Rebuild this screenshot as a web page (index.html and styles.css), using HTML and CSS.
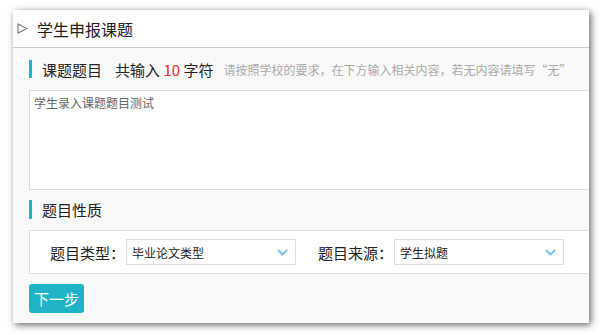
FILE: index.html
```html
<!DOCTYPE html>
<html lang="zh-CN">
<head>
  <meta charset="UTF-8">
  <meta name="viewport" content="width=device-width, initial-scale=1.0">
  <title>学生申报课题</title>
  <link rel="stylesheet" href="styles.css">
</head>
<body>
  <div class="panel">
    <div class="panel-head">
      <svg class="toggle" width="11" height="11" viewBox="0 0 11 11">
        <path d="M1 1 L10 5.5 L1 10 Z" fill="none" stroke="#777" stroke-width="1.1"/>
      </svg>
      <span class="panel-title">学生申报课题</span>
    </div>
    <div class="panel-body">
      <div class="section-title">
        <span class="name">课题题目</span>
        <span class="count">共输入 <em>10</em> 字符</span>
        <span class="hint">请按照学校的要求，在下方输入相关内容，若无内容请填写“无”</span>
      </div>
      <textarea class="topic-input">学生录入课题题目测试</textarea>

      <div class="section-title second">
        <span class="name">题目性质</span>
      </div>
      <div class="form-row">
        <label class="field-label">题目类型：</label>
        <div class="select">
          <span>毕业论文类型</span>
          <svg width="11" height="7" viewBox="0 0 11 7"><path d="M1 1 L5.5 5.5 L10 1" fill="none" stroke="#7cc2ee" stroke-width="2"/></svg>
        </div>
        <label class="field-label">题目来源：</label>
        <div class="select">
          <span>学生拟题</span>
          <svg width="11" height="7" viewBox="0 0 11 7"><path d="M1 1 L5.5 5.5 L10 1" fill="none" stroke="#7cc2ee" stroke-width="2"/></svg>
        </div>
      </div>
      <button class="next-btn">下一步</button>
    </div>
  </div>
</body>
</html>
```

FILE: styles.css
```css
body {
  margin: 0;
  padding: 10px 13px;
  background: #fff;
  font-family: "Noto Sans CJK SC", "Noto Sans", sans-serif;
  color: #333;
}

.panel {
  width: 576px;
  height: 313px;
  background: #f9f9f9;
  box-shadow: 2px 2px 7px rgba(0, 0, 0, 0.6);
  overflow: hidden;
}

.panel-head {
  height: 37px;
  background: #fff;
  border-bottom: 1px solid #ccc;
  display: flex;
  align-items: center;
  padding-left: 4px;
}

.toggle {
  margin-right: 9px;
}

.panel-title {
  font-size: 16px;
  color: #222;
}

.panel-body {
  padding: 12px 0 10px 16px;
}

.section-title {
  height: 18px;
  border-left: 3px solid #20b3c8;
  padding-left: 10px;
  display: flex;
  align-items: center;
  font-size: 15px;
  color: #222;
  white-space: nowrap;
}

.section-title.second {
  height: 19px;
  margin-top: 10px;
}

.count {
  margin-left: 13px;
}

.count em {
  font-style: normal;
  color: #e8262a;
}

.hint {
  margin-left: 10px;
  font-size: 12px;
  color: #aaa;
}

.topic-input {
  display: block;
  box-sizing: border-box;
  width: 600px;
  height: 100px;
  margin-top: 12px;
  padding: 3px 4px;
  border: 1px solid #ddd;
  background: #fff;
  resize: none;
  font-family: inherit;
  font-size: 12px;
  line-height: 17px;
  color: #666;
  outline: none;
}

.form-row {
  box-sizing: border-box;
  width: 600px;
  height: 44px;
  margin-top: 11px;
  border: 1px solid #ddd;
  background: #fff;
  display: flex;
  align-items: center;
  padding-left: 20px;
}

.field-label {
  font-size: 15px;
  color: #222;
  margin-right: 1px;
}

.select {
  box-sizing: border-box;
  width: 170px;
  height: 26px;
  border: 1px solid #ddd;
  display: flex;
  align-items: center;
  justify-content: space-between;
  padding: 0 7px 0 5px;
  font-size: 12px;
  color: #222;
  margin-right: 22px;
}

.next-btn {
  display: block;
  margin-top: 10px;
  width: 55px;
  height: 29px;
  border: none;
  border-radius: 3px;
  background: #20b3c8;
  color: #fff;
  font-family: inherit;
  font-size: 15px;
  padding: 0;
  cursor: pointer;
}
```
